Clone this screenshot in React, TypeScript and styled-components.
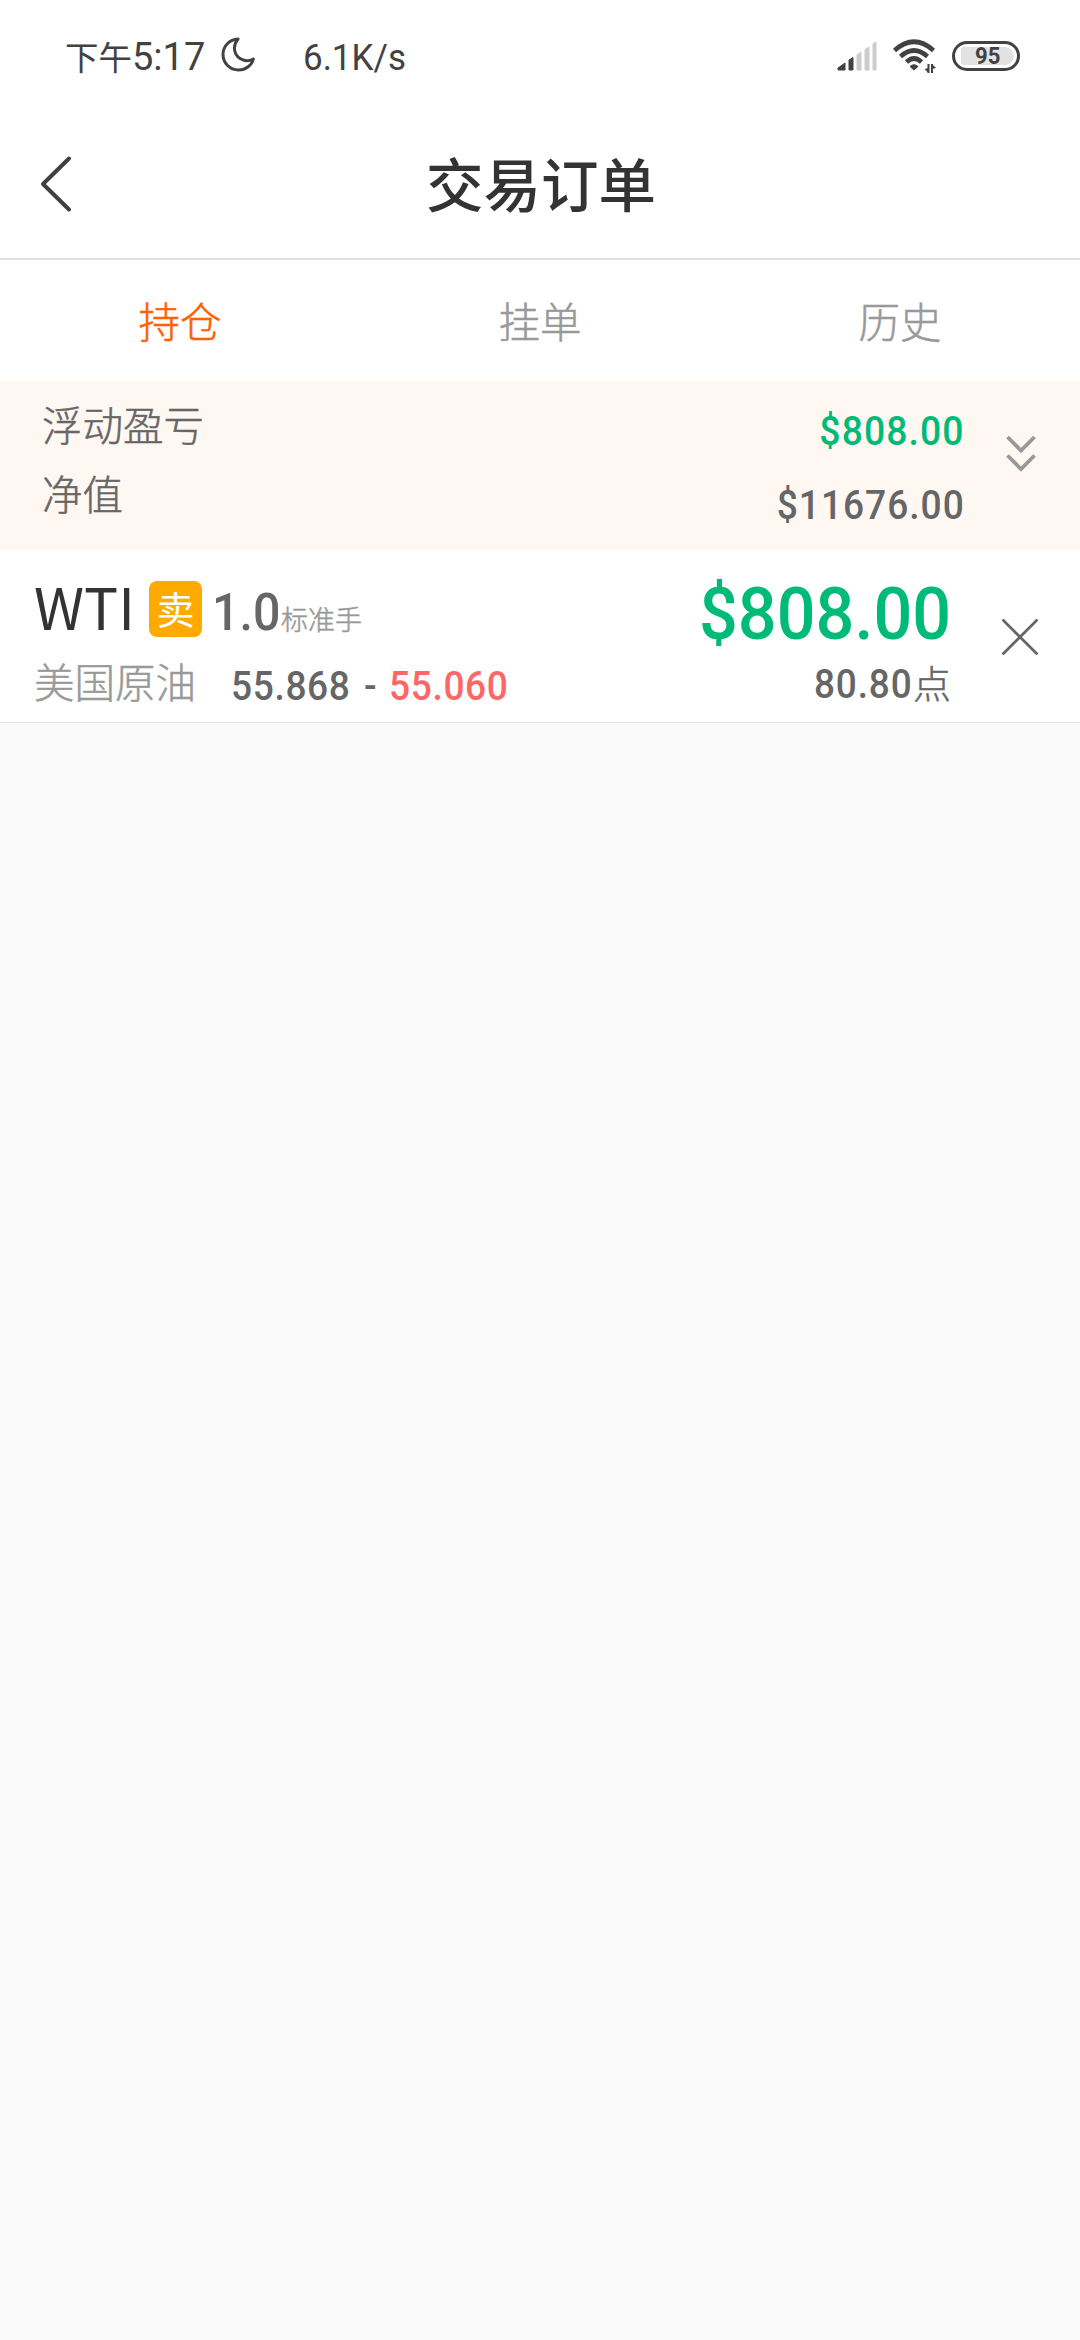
import React from 'react';
import styled, { createGlobalStyle } from 'styled-components';

const GlobalStyle = createGlobalStyle`
  * { box-sizing: border-box; }
  body { margin: 0; background: #fafafa; }
`;

const CJK = `"Noto Sans CJK SC", sans-serif`;
const NUM = `Roboto, "Noto Sans CJK SC", sans-serif`;

const Screen = styled.div`
  width: 1080px;
  min-height: 2340px;
  display: flex;
  flex-direction: column;
  background: #fafafa;
  font-family: ${CJK};
`;

const Text = styled.span<{ $size: number; $color: string; $weight?: number; $track?: number }>`
  display: block;
  white-space: nowrap;
  line-height: 1;
  font-family: ${CJK};
  font-size: ${p => p.$size}px;
  font-weight: ${p => p.$weight ?? 300};
  letter-spacing: ${p => p.$track ?? 0}px;
  color: ${p => p.$color};
  -webkit-text-stroke: ${p => (p.$weight ? 0 : 0.5)}px currentColor;
`;

const Num = styled(Text)<{ $stretch?: number; $origin?: string; $space?: number }>`
  font-family: ${NUM};
  font-weight: ${p => p.$weight ?? 500};
  word-spacing: ${p => p.$space ?? 0}px;
  -webkit-text-stroke: 0;
  transform: scaleX(${p => p.$stretch ?? 1});
  transform-origin: ${p => p.$origin ?? 'left'} center;
`;

const StatusBar = styled.div`
  height: 112px;
  padding: 0 60px 0 65px;
  display: flex;
  justify-content: space-between;
  background: #fff;
`;

const StatusGroup = styled.div<{ $gap?: number }>`
  height: 112px;
  display: flex;
  align-items: center;
  gap: ${p => p.$gap ?? 0}px;
`;

const Clock = styled.div`
  display: flex;
  align-items: center;
`;

const MoonIcon = styled.svg`
  margin: 0 48px 3px 16px;
`;

const StatusIcon = styled.svg`
  display: block;
  flex: none;
`;

const Battery = styled.div`
  width: 68px;
  height: 30px;
  border: 3px solid #424242;
  border-radius: 15px;
  padding: 3px;
  display: flex;
`;

const BatteryFill = styled.div`
  flex: 1;
  margin: 0 0 0 3px;
  border-radius: 3px 9px 9px 3px;
  background: #e2e2e2;
  display: flex;
  align-items: center;
  justify-content: center;
`;

const Header = styled.header`
  height: 148px;
  border-bottom: 2px solid #dddde3;
  background: #fff;
  display: grid;
  grid-template-columns: 120px 1fr 120px;
  align-items: center;
`;

const BackButton = styled.button`
  width: 120px;
  height: 146px;
  padding: 0 0 2px 38px;
  border: 0;
  background: none;
  display: flex;
  align-items: center;
`;

const Title = styled.h1`
  margin: 0;
  padding: 0 0 6px 2px;
  text-align: center;
  font-size: 57.5px;
  line-height: 134px;
  font-weight: 500;
  color: #333;
`;

const Tabs = styled.nav`
  height: 121px;
  display: grid;
  grid-template-columns: repeat(3, 1fr);
  background: #fff;
`;

const Tab = styled.button<{ $active?: boolean }>`
  border: 0;
  padding: 0 0 2px;
  background: none;
  font-family: ${CJK};
  font-size: 41.5px;
  font-weight: 300;
  -webkit-text-stroke: 0.5px currentColor;
  color: ${p => (p.$active ? '#ff6200' : '#999')};
`;

const Summary = styled.section`
  height: 169px;
  padding: 0 44px 0 42px;
  display: flex;
  background: #fff8f2;
`;

const Labels = styled.div`
  flex: 1;
  padding-top: 23px;
  display: flex;
  flex-direction: column;
  gap: 28px;
`;

const Values = styled.div`
  padding-top: 30px;
  margin-right: 41px;
  display: flex;
  flex-direction: column;
  align-items: flex-end;
  gap: 33px;
`;

const Toggle = styled.svg`
  margin-top: 54px;
`;

const Order = styled.section`
  height: 173px;
  border-bottom: 1px solid #e3e3e9;
  padding: 0 42px 0 34px;
  display: flex;
  background: #fff;
`;

const OrderMain = styled.div`
  flex: 1;
  padding-top: 30px;
`;

const Line = styled.div<{ $height: number }>`
  height: ${p => p.$height}px;
  display: flex;
  align-items: center;
`;

const Badge = styled.div`
  width: 53px;
  height: 56px;
  margin: 0 10px 0 18px;
  border-radius: 8px;
  background: #ffaa00;
  display: flex;
  align-items: center;
  justify-content: center;
  padding-bottom: 2px;
`;

const Shift = styled.div<{ $top?: number; $bottom?: number; $left?: number; $width?: number }>`
  padding-top: ${p => p.$top ?? 0}px;
  padding-bottom: ${p => p.$bottom ?? 0}px;
  margin-left: ${p => p.$left ?? 0}px;
  width: ${p => (p.$width ? `${p.$width}px` : 'auto')};
`;

const OrderResult = styled.div`
  padding-top: 28px;
  margin-right: 51px;
  display: flex;
  flex-direction: column;
  align-items: flex-end;
`;

const CloseIcon = styled.svg`
  margin-top: 69px;
`;

export default function App() {
  return (
    <Screen>
      <GlobalStyle />
      <StatusBar>
        <StatusGroup>
          <Clock>
            <Text $size={33.5} $color="#424242" $weight={400}>下午</Text>
            <Shift $top={2}><Num $size={38} $color="#424242" $weight={400}>5:17</Num></Shift>
          </Clock>
          <MoonIcon width="34" height="35" viewBox="0 0 34 35" fill="none" stroke="#424242" strokeWidth="3" strokeLinejoin="round">
            <path d="M17 2C8.500 2.500 2 9.200 2 17.500C2 26.200 9 33 17.500 33C25 33 31 28 32.300 22C29 23.800 25.500 24.500 22 22.800C13.500 20 10.500 10 17 2Z" />
          </MoonIcon>
          <Shift $top={2}><Num $size={37} $color="#424242" $weight={400} $stretch={0.945}>6.1K/s</Num></Shift>
        </StatusGroup>
        <StatusGroup $gap={16}>
          <StatusIcon width="41" height="30" viewBox="1 0 41 30">
            <path d="M3 27L10 22V29H3Z" fill="#424242" stroke="#424242" strokeLinejoin="round" />
            <path d="M14 19L18 16.500V29H14Z" fill="#424242" stroke="#424242" strokeLinejoin="round" />
            <path d="M22 14L26 11V29H22ZM30 8.500L34 6V29H30ZM38 3L41 1V29H38Z" fill="#ccc" stroke="#ccc" strokeLinejoin="round" />
          </StatusIcon>
          <StatusIcon width="43" height="34" viewBox="0 0 43 34" fill="none" stroke="#424242" strokeWidth="4.6">
            <path d="M1.500 11.500Q21 -6 40.500 11.500" />
            <path d="M7.500 17.500Q21 5.500 34.500 17.500" />
            <path d="M13.500 23Q21 16 28.500 23" />
            <path d="M17 27.500Q21 24 25 27.500L21 31Z" fill="#424242" stroke="#424242" strokeWidth="1" strokeLinejoin="round" />
            <path d="M35.500 25V34M39 34V25" strokeWidth="2" />
            <path d="M31.500 30L35.500 34V29ZM43 29L39 25V30Z" fill="#424242" stroke="none" />
          </StatusIcon>
          <Battery>
            <BatteryFill>
              <Num $size={24} $color="#424242" $weight={700} $stretch={0.92} $origin="center">95</Num>
            </BatteryFill>
          </Battery>
        </StatusGroup>
      </StatusBar>

      <Header>
        <BackButton aria-label="返回">
          <svg width="36" height="58" viewBox="0 0 36 58" fill="none" stroke="#404040" strokeWidth="4" strokeLinecap="round" strokeLinejoin="round">
            <path d="M31 3.500L5 29L31 54.500" />
          </svg>
        </BackButton>
        <Title>交易订单</Title>
      </Header>

      <Tabs>
        <Tab $active>持仓</Tab>
        <Tab>挂单</Tab>
        <Tab>历史</Tab>
      </Tabs>

      <Summary>
        <Labels>
          <Text $size={40.5} $color="#666">浮动盈亏</Text>
          <Text $size={40.5} $color="#666">净值</Text>
        </Labels>
        <Values>
          <Num $size={41} $color="#00ba78" $stretch={0.91} $track={1.2} $origin="right">$808.00</Num>
          <Num $size={41} $color="#666" $stretch={0.905} $track={1.1} $origin="right">$11676.00</Num>
        </Values>
        <Toggle width="30" height="38" viewBox="0 0 30 38" fill="none" stroke="#999" strokeWidth="3.8">
          <path d="M1.500 2L15 15.500L28.500 2M1.500 20.500L15 34L28.500 20.500" />
        </Toggle>
      </Summary>

      <Order>
        <OrderMain>
          <Line $height={58}>
            <Shift $bottom={8} $width={97}><Text $size={57} $color="#333" $weight={400}>WTI</Text></Shift>
            <Badge><Text $size={38} $color="#fff" $weight={400}>卖</Text></Badge>
            <Shift $top={8} $width={69}><Num $size={52} $color="#666" $stretch={0.93}>1.0</Num></Shift>
            <Shift $top={18}><Text $size={27} $color="#999">标准手</Text></Shift>
          </Line>
          <Line $height={86}>
            <Text $size={40.5} $color="#999">美国原油</Text>
            <Shift $top={10} $left={35} $width={158}><Num $size={41} $color="#666" $stretch={0.905} $track={0.7} $space={4}>55.868 -</Num></Shift>
            <Shift $top={10}><Num $size={41} $color="#f66" $stretch={0.905} $track={0.7}>55.060</Num></Shift>
          </Line>
        </OrderMain>
        <OrderResult>
          <Num $size={73} $color="#00ba78" $stretch={0.937} $origin="right">$808.00</Num>
          <Line $height={66}>
            <Shift $top={1}><Num $size={41} $color="#666" $stretch={0.9} $track={1} $origin="right">80.80</Num></Shift>
            <Shift $bottom={4}><Text $size={38} $color="#666">点</Text></Shift>
          </Line>
        </OrderResult>
        <CloseIcon width="36" height="36" viewBox="0 0 36 36" fill="none" stroke="#666" strokeWidth="2.700">
          <path d="M0.500 0.500L35.500 35.500M35.500 0.500L0.500 35.500" />
        </CloseIcon>
      </Order>
    </Screen>
  );
}
